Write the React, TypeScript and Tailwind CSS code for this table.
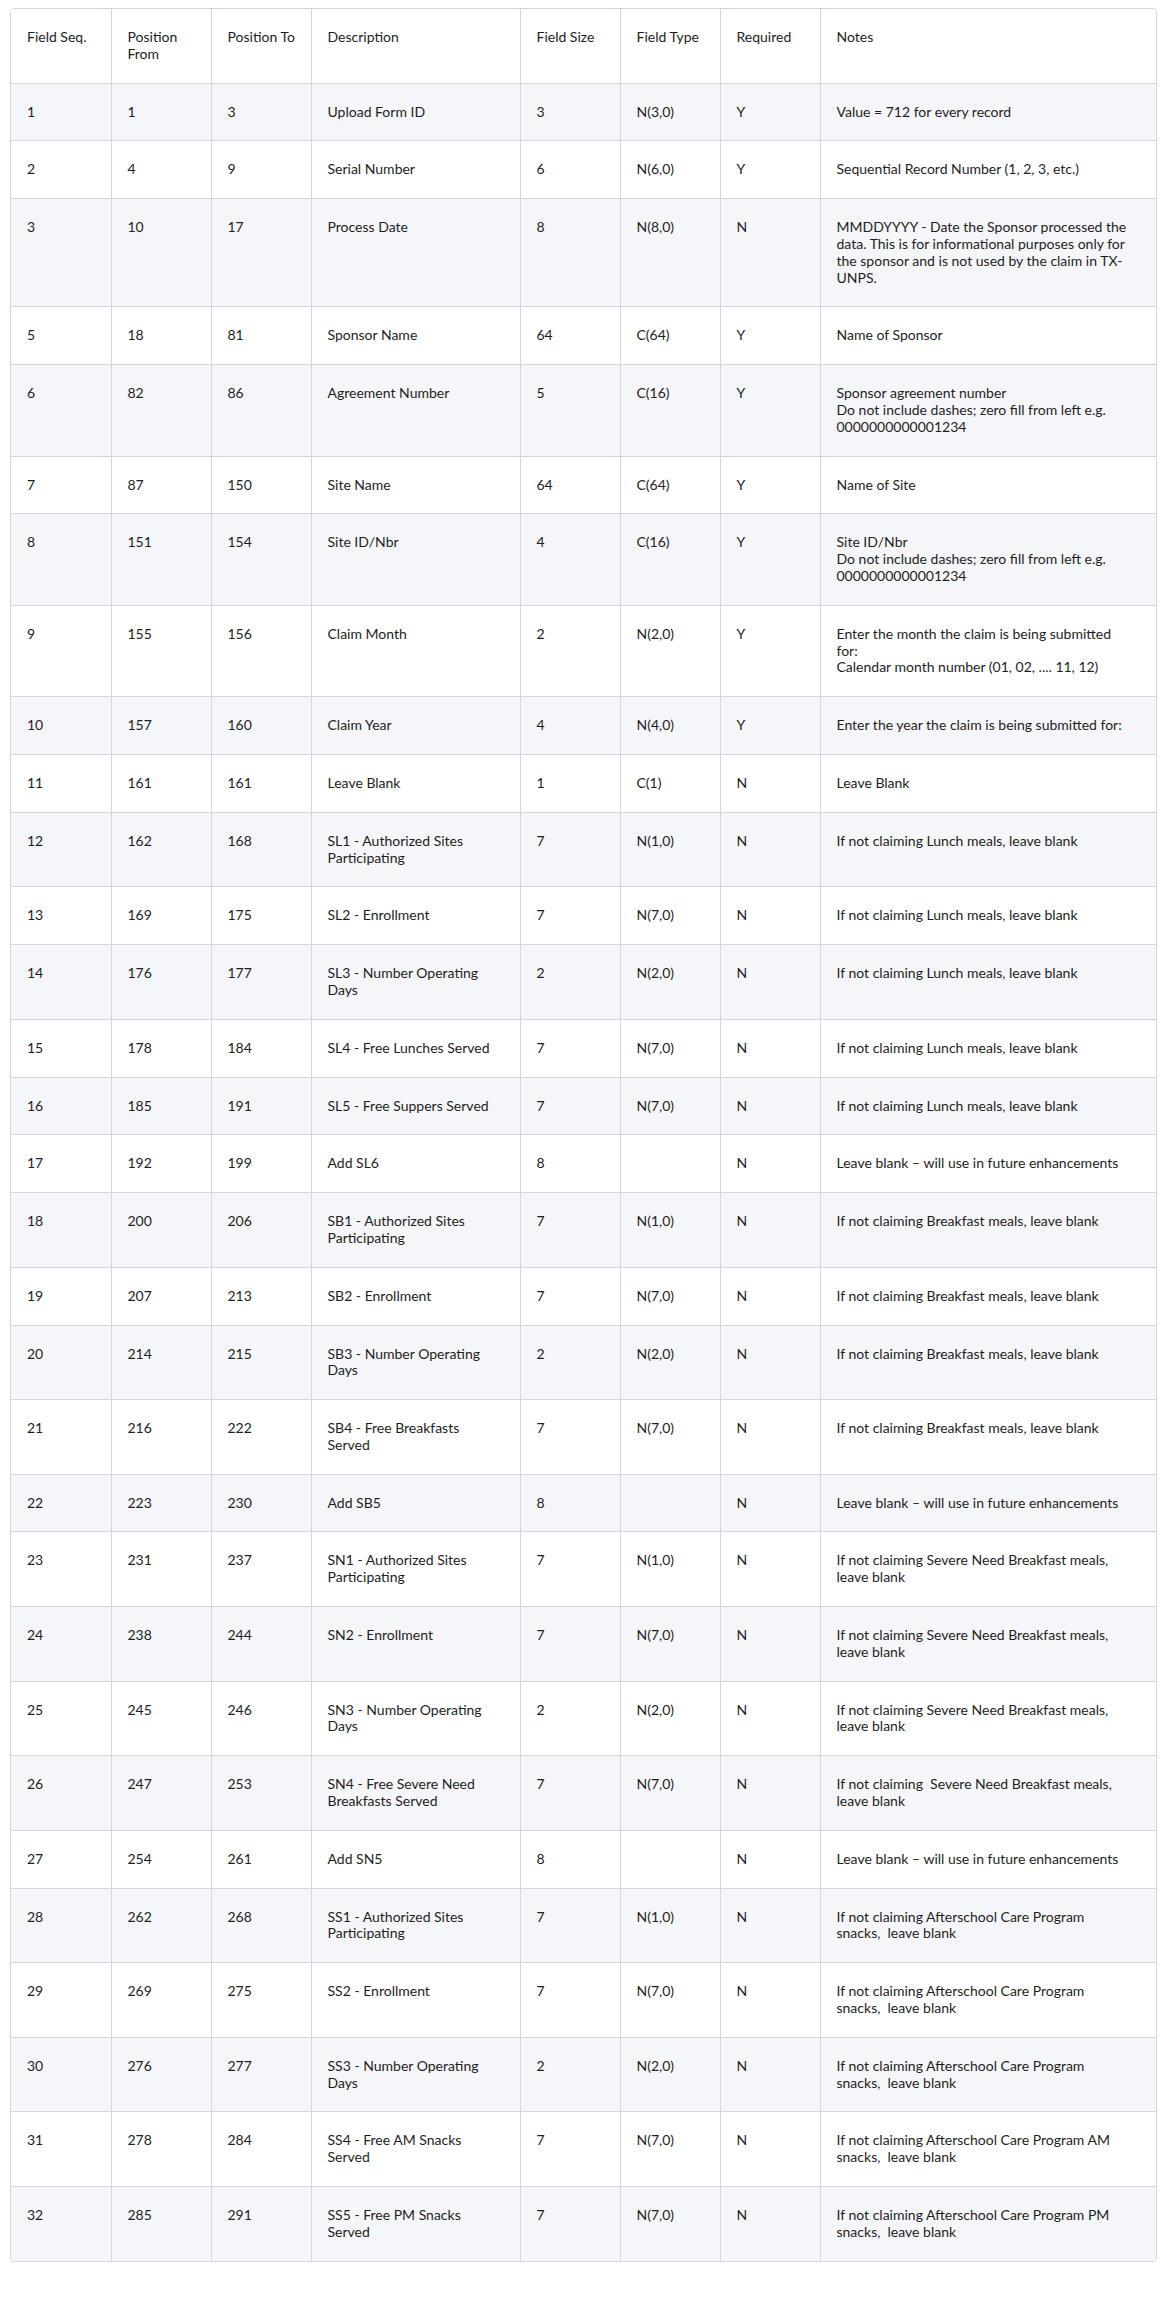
import React from "react";

type Row = [string, string, string, string, string, string, string, string];

const LUNCH = "If not claiming Lunch meals, leave blank";
const BREAKFAST = "If not claiming Breakfast meals, leave blank";
const SEVERE = "If not claiming Severe Need Breakfast meals,\nleave blank";
const AFTER = "If not claiming Afterschool Care Program\nsnacks,  leave blank";
const FUTURE = "Leave blank \u2013 will use in future enhancements";

const header: Row = [
  "Field Seq.",
  "Position\nFrom",
  "Position To",
  "Description",
  "Field Size",
  "Field Type",
  "Required",
  "Notes",
];

const rows: Row[] = [
  ["1", "1", "3", "Upload Form ID", "3", "N(3,0)", "Y", "Value = 712 for every record"],
  ["2", "4", "9", "Serial Number", "6", "N(6,0)", "Y", "Sequential Record Number (1, 2, 3, etc.)"],
  [
    "3",
    "10",
    "17",
    "Process Date",
    "8",
    "N(8,0)",
    "N",
    "MMDDYYYY - Date the Sponsor processed the\ndata. This is for informational purposes only for\nthe sponsor and is not used by the claim in TX-\nUNPS.",
  ],
  ["5", "18", "81", "Sponsor Name", "64", "C(64)", "Y", "Name of Sponsor"],
  [
    "6",
    "82",
    "86",
    "Agreement Number",
    "5",
    "C(16)",
    "Y",
    "Sponsor agreement number\nDo not include dashes; zero fill from left e.g.\n0000000000001234",
  ],
  ["7", "87", "150", "Site Name", "64", "C(64)", "Y", "Name of Site"],
  [
    "8",
    "151",
    "154",
    "Site ID/Nbr",
    "4",
    "C(16)",
    "Y",
    "Site ID/Nbr\nDo not include dashes; zero fill from left e.g.\n0000000000001234",
  ],
  [
    "9",
    "155",
    "156",
    "Claim Month",
    "2",
    "N(2,0)",
    "Y",
    "Enter the month the claim is being submitted\nfor:\nCalendar month number (01, 02, .... 11, 12)",
  ],
  ["10", "157", "160", "Claim Year", "4", "N(4,0)", "Y", "Enter the year the claim is being submitted for:"],
  ["11", "161", "161", "Leave Blank", "1", "C(1)", "N", "Leave Blank"],
  ["12", "162", "168", "SL1 - Authorized Sites\nParticipating", "7", "N(1,0)", "N", LUNCH],
  ["13", "169", "175", "SL2 - Enrollment", "7", "N(7,0)", "N", LUNCH],
  ["14", "176", "177", "SL3 - Number Operating\nDays", "2", "N(2,0)", "N", LUNCH],
  ["15", "178", "184", "SL4 - Free Lunches Served", "7", "N(7,0)", "N", LUNCH],
  ["16", "185", "191", "SL5 - Free Suppers Served", "7", "N(7,0)", "N", LUNCH],
  ["17", "192", "199", "Add SL6", "8", "", "N", FUTURE],
  ["18", "200", "206", "SB1 - Authorized Sites\nParticipating", "7", "N(1,0)", "N", BREAKFAST],
  ["19", "207", "213", "SB2 - Enrollment", "7", "N(7,0)", "N", BREAKFAST],
  ["20", "214", "215", "SB3 - Number Operating\nDays", "2", "N(2,0)", "N", BREAKFAST],
  ["21", "216", "222", "SB4 - Free Breakfasts\nServed", "7", "N(7,0)", "N", BREAKFAST],
  ["22", "223", "230", "Add SB5", "8", "", "N", FUTURE],
  ["23", "231", "237", "SN1 - Authorized Sites\nParticipating", "7", "N(1,0)", "N", SEVERE],
  ["24", "238", "244", "SN2 - Enrollment", "7", "N(7,0)", "N", SEVERE],
  ["25", "245", "246", "SN3 - Number Operating\nDays", "2", "N(2,0)", "N", SEVERE],
  [
    "26",
    "247",
    "253",
    "SN4 - Free Severe Need\nBreakfasts Served",
    "7",
    "N(7,0)",
    "N",
    "If not claiming  Severe Need Breakfast meals,\nleave blank",
  ],
  ["27", "254", "261", "Add SN5", "8", "", "N", FUTURE],
  ["28", "262", "268", "SS1 - Authorized Sites\nParticipating", "7", "N(1,0)", "N", AFTER],
  ["29", "269", "275", "SS2 - Enrollment", "7", "N(7,0)", "N", AFTER],
  ["30", "276", "277", "SS3 - Number Operating\nDays", "2", "N(2,0)", "N", AFTER],
  [
    "31",
    "278",
    "284",
    "SS4 - Free AM Snacks\nServed",
    "7",
    "N(7,0)",
    "N",
    "If not claiming Afterschool Care Program AM\nsnacks,  leave blank",
  ],
  [
    "32",
    "285",
    "291",
    "SS5 - Free PM Snacks\nServed",
    "7",
    "N(7,0)",
    "N",
    "If not claiming Afterschool Care Program PM\nsnacks,  leave blank",
  ],
];

function Cells({ row, last, head }: { row: Row; last: boolean; head?: boolean }) {
  return (
    <>
      {row.map((c, i) => (
        <td
          key={i}
          className={
            "align-top px-4 py-5 " +
            (head ? "whitespace-pre " : "whitespace-pre-wrap ") +
            (i < 7 ? "border-r border-[#d3d6dc] " : "") +
            (last ? "" : "border-b border-[#d3d6dc]")
          }
        >
          {c}
        </td>
      ))}
    </>
  );
}

export default function App() {
  return (
    <div className="bg-white min-h-[2308px] pt-2 pl-[10px]">
      <div
        className="w-[1147px] border border-[#d3d6dc] rounded overflow-hidden text-[#1d1e22] text-[14px] leading-[16.8px]"
        style={{ fontFamily: "Lato, 'Open Sans', sans-serif" }}
      >
        <table className="w-full table-fixed border-collapse">
          <colgroup>
            <col className="w-[100px]" />
            <col className="w-[100px]" />
            <col className="w-[100px]" />
            <col className="w-[209px]" />
            <col className="w-[100px]" />
            <col className="w-[100px]" />
            <col className="w-[100px]" />
            <col />
          </colgroup>
          <thead>
            <tr className="bg-white text-left font-normal">
              <Cells row={header} last={false} head />
            </tr>
          </thead>
          <tbody>
            {rows.map((r, idx) => (
              <tr key={idx} className={idx % 2 === 0 ? "bg-[#f5f6f9]" : "bg-white"}>
                <Cells row={r} last={idx === rows.length - 1} />
              </tr>
            ))}
          </tbody>
        </table>
      </div>
    </div>
  );
}
